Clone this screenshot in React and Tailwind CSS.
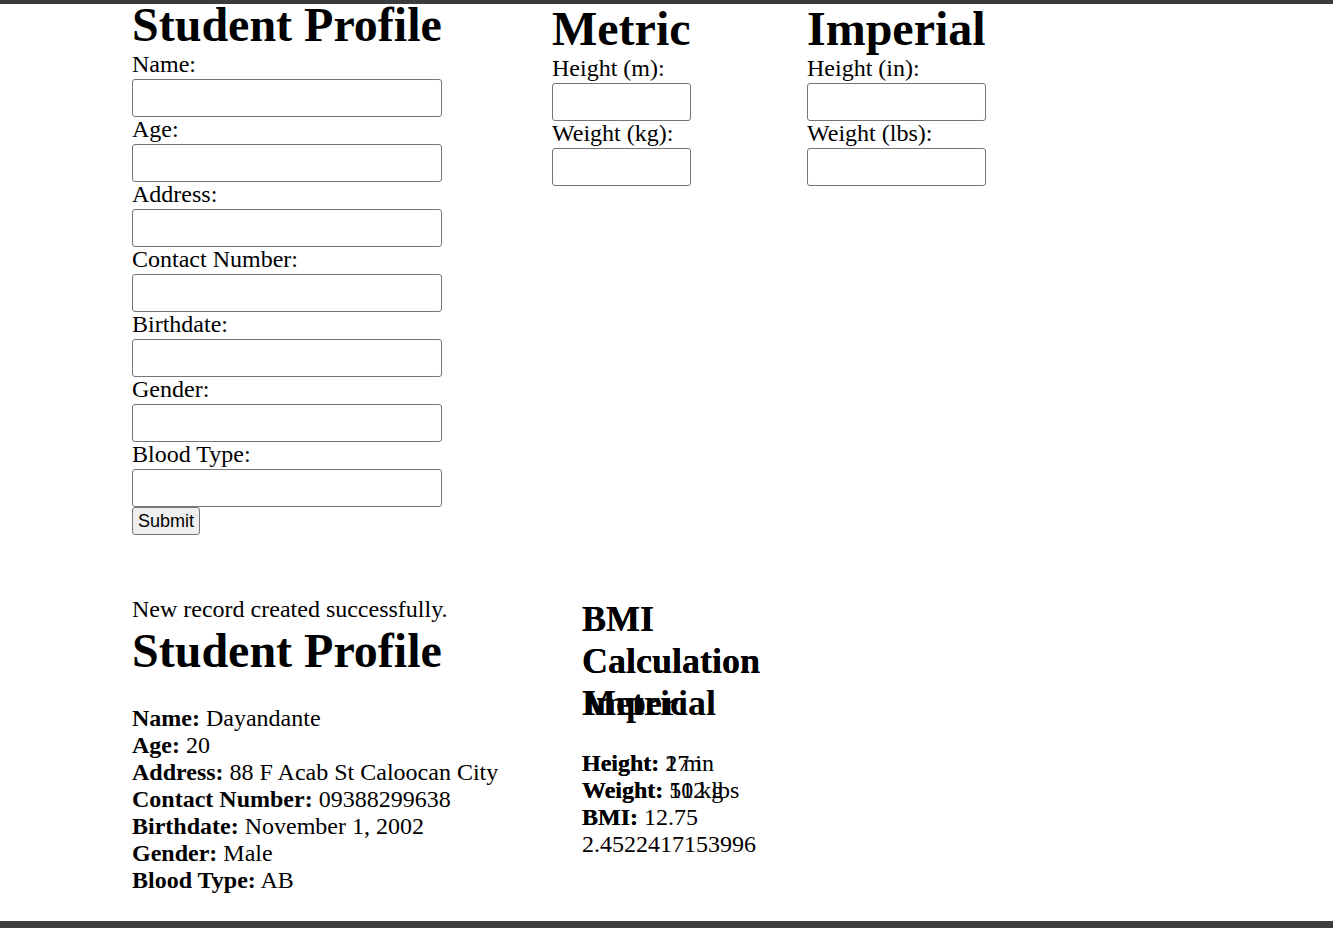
import React from 'react';

const Field = ({ label }) => (
  <div>
    <label className="block h-[24px] leading-[24px] whitespace-nowrap">{label}</label>
    <input
      type="text"
      className="mt-[3px] block h-[38px] w-full rounded-[3px] border border-[#767676] bg-white px-[2px] outline-none"
    />
  </div>
);

const BmiBlock = ({ title, height, weight, bmi, overlay }) => (
  <div className={overlay ? 'absolute left-0 top-0 w-full' : ''}>
    <h2 className="text-[36px] font-bold leading-[42px]">BMI Calculation {title}</h2>
    <div className="mt-[26px] leading-[27px]">
      <div>
        <b>Height:</b> {height}
      </div>
      <div>
        <b>Weight:</b> {weight}
      </div>
      <div>
        <b>BMI:</b> {bmi}
      </div>
    </div>
  </div>
);

const App = () => {
  const profile = [
    ['Name:', 'Dayandante'],
    ['Age:', '20'],
    ['Address:', '88 F Acab St Caloocan City'],
    ['Contact Number:', '09388299638'],
    ['Birthdate:', 'November 1, 2002'],
    ['Gender:', 'Male'],
    ['Blood Type:', 'AB'],
  ];

  return (
    <div className="flex h-[928px] flex-col overflow-hidden bg-white font-['Liberation_Serif',serif] text-[24px] text-black">
      <div className="h-[4px] shrink-0 bg-[#3c3c3c]" />

      <div className="flex-1 pl-[132px]">
        {/* Forms */}
        <div className="flex items-start">
          <div className="w-[310px]">
            <h1 className="mb-[6px] whitespace-nowrap text-[48px] font-bold leading-[42px]">Student Profile</h1>
            <Field label="Name:" />
            <Field label="Age:" />
            <Field label="Address:" />
            <Field label="Contact Number:" />
            <Field label="Birthdate:" />
            <Field label="Gender:" />
            <Field label="Blood Type:" />
            <div className="flex">
              <button className="h-[28px] rounded-[3px] border border-[#767676] bg-[#efefef] px-[5px] font-['Liberation_Sans',sans-serif] text-[18px] leading-[24px] text-black">
                Submit
              </button>
            </div>
          </div>

          <div className="ml-[110px] mt-[4px] w-[139px]">
            <h1 className="mb-[6px] text-[48px] font-bold leading-[42px]">Metric</h1>
            <Field label="Height (m):" />
            <Field label="Weight (kg):" />
          </div>

          <div className="ml-[116px] mt-[4px] w-[179px]">
            <h1 className="mb-[6px] text-[48px] font-bold leading-[42px]">Imperial</h1>
            <Field label="Height (in):" />
            <Field label="Weight (lbs):" />
          </div>
        </div>

        {/* Results */}
        <div className="mt-[61px] flex items-start">
          <div className="w-[450px]">
            <p className="leading-[27px]">New record created successfully.</p>
            <h1 className="mb-[33px] mt-[7px] text-[48px] font-bold leading-[42px]">Student Profile</h1>
            <div className="leading-[27px]">
              {profile.map(([k, v]) => (
                <div key={k} className="whitespace-nowrap">
                  <b>{k}</b> {v}
                </div>
              ))}
            </div>
          </div>

          <div className="relative mt-[2px] w-[200px]">
            <BmiBlock title="Metric" height="2 m" weight="51 kg" bmi="12.75" />
            <BmiBlock title="Imperial" height="17 in" weight="102 lbs" bmi="2.4522417153996" overlay />
          </div>
        </div>
      </div>

      <div className="h-[7px] shrink-0 bg-[#3c3c3c]" />
    </div>
  );
};

export default App;
